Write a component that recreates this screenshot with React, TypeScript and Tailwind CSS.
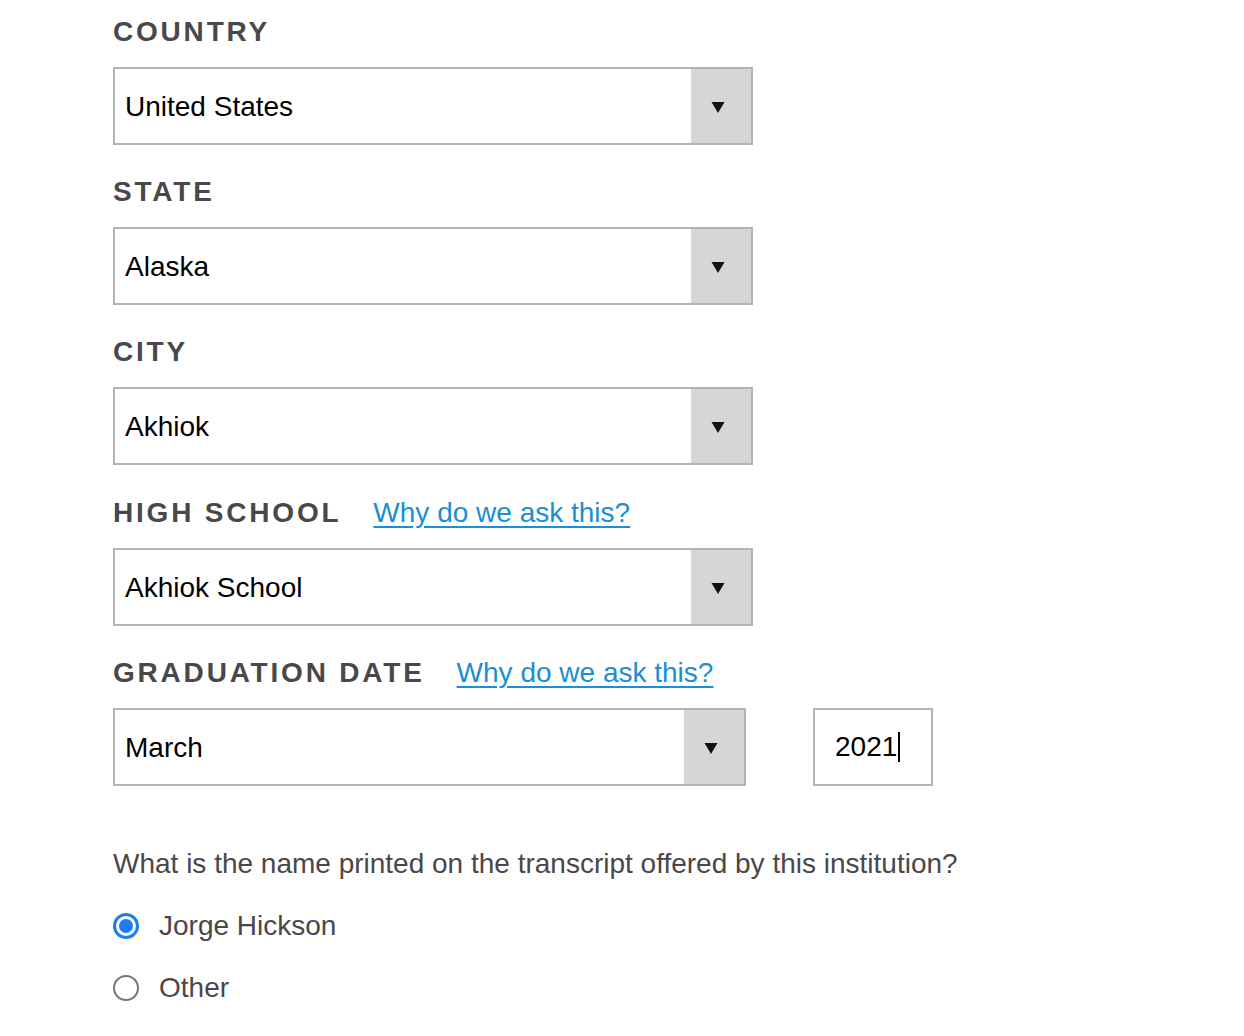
import React from 'react';

const font = { fontFamily: '"Liberation Sans", Arial, Helvetica, sans-serif' };

const Caret: React.FC = () => (
  <svg width="14" height="13" viewBox="0 0 14 13" aria-hidden>
    <path d="M0.5 1 L13.5 1 L7 12 Z" fill="#111" />
  </svg>
);

interface SelectBoxProps {
  value: string;
  wide?: boolean;
}

const SelectBox: React.FC<SelectBoxProps> = ({ value, wide = true }) => (
  <div
    className={`flex h-[78px] border-2 border-[#b3b3b3] bg-white ${wide ? 'w-[640px]' : 'w-[633px]'}`}
  >
    <div className="flex flex-1 items-center pl-[10px] pt-[1px] text-[28px] text-black">{value}</div>
    <div className="flex w-[60px] items-center justify-center bg-[#d6d6d6] pr-[6px] pt-[3px]">
      <Caret />
    </div>
  </div>
);

interface LabelProps {
  text: string;
  link?: boolean;
}

const Label: React.FC<LabelProps> = ({ text, link }) => (
  <div className="mb-[19px] flex h-[32px] items-center leading-[32px]">
    <span className="text-[28px] font-bold tracking-[2.8px] text-[#4a474a]">{text}</span>
    {link && (
      <a href="#" className="ml-[32px] text-[28px] text-[#1a8ed6] underline underline-offset-[4px]">
        Why do we ask this?
      </a>
    )}
  </div>
);

const Radio: React.FC<{ checked?: boolean; label: string }> = ({ checked, label }) => (
  <label className="flex h-[32px] items-center leading-[32px]">
    {checked ? (
      <span className="flex h-[26px] w-[26px] items-center justify-center rounded-full border-[3px] border-[#1a7cf7] bg-white">
        <span className="h-[14px] w-[14px] rounded-full bg-[#1a7cf7]" />
      </span>
    ) : (
      <span className="h-[26px] w-[26px] rounded-full border-2 border-[#767676] bg-white" />
    )}
    <span className="ml-[20px] text-[28px] text-[#4a474a]">{label}</span>
  </label>
);

export default function App() {
  return (
    <div className="min-h-screen w-full bg-white" style={font}>
      <div className="pl-[113px] pt-[16px]">
        <Label text="COUNTRY" />
        <SelectBox value="United States" />

        <div className="mt-[31px]">
          <Label text="STATE" />
          <SelectBox value="Alaska" />
        </div>

        <div className="mt-[31px]">
          <Label text="CITY" />
          <SelectBox value="Akhiok" />
        </div>

        <div className="mt-[32px]">
          <Label text="HIGH SCHOOL" link />
          <SelectBox value="Akhiok School" />
        </div>

        <div className="mt-[31px]">
          <Label text="GRADUATION DATE" link />
          <div className="flex">
            <SelectBox value="March" wide={false} />
            <div className="ml-[67px] flex h-[78px] w-[120px] items-center border-2 border-[#b3b3b3] pl-[20px] text-[28px] text-black">
              2021<span className="ml-[1px] inline-block h-[30px] w-[2px] bg-black" />
            </div>
          </div>
        </div>

        <p className="mt-[62px] text-[28px] leading-[32px] text-[#4a474a]">
          What is the name printed on the transcript offered by this institution?
        </p>

        <div className="mt-[30px] flex flex-col gap-[30px]">
          <Radio checked label="Jorge Hickson" />
          <Radio label="Other" />
        </div>
      </div>
    </div>
  );
}
